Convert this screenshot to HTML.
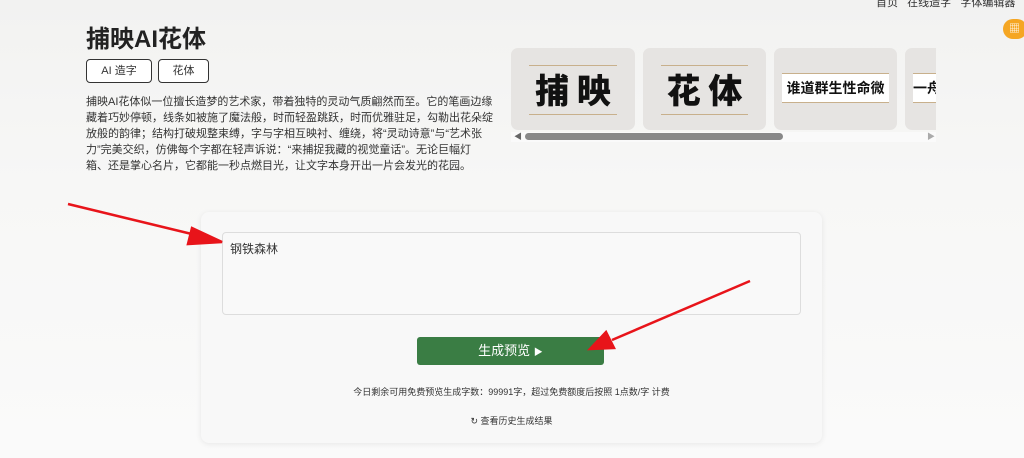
<!DOCTYPE html>
<html><head><meta charset="utf-8"><style>
body{margin:0;width:1024px;height:458px;overflow:hidden;background:linear-gradient(#f2f2f1,#f7f7f6 40%,#fafafa);font-family:"Liberation Sans","Noto Sans CJK SC",sans-serif;color:#333;position:relative}
.a{position:absolute}
h1{position:absolute;left:86px;top:19px;margin:0;font-size:24px;font-weight:bold;color:#222}
.tag{position:absolute;top:59px;height:22px;border:1px solid #333;border-radius:4px;font-size:11px;line-height:22px;text-align:center;background:#fff}
.p{left:86px;top:94px;width:420px;font-size:11px;line-height:16px;color:#333;white-space:nowrap}
.c{position:absolute;top:48px;height:82px;background:#e6e4e2;border-radius:7px;overflow:hidden}
.c .t{position:absolute;left:0;right:0;top:17px;text-align:center;font-family:"Noto Sans CJK SC",sans-serif;font-weight:900;font-size:34px;color:#111;line-height:46px;border-top:1px solid #c8b08c;border-bottom:1px solid #c8b08c;margin:0 18px;height:48px}
.card{left:201px;top:212px;width:621px;height:231px;background:#f8f8f8;border-radius:8px;box-shadow:0 1px 6px rgba(0,0,0,.08)}
</style></head><body>
<div class="a" style="left:876px;top:-6px;font-size:11px;color:#333">首页 &nbsp; 在线造字 &nbsp; 字体编辑器</div>
<div class="a" style="left:1003px;top:19px;width:24px;height:20px;border-radius:10px;background:#f5a623;color:#fff;font-size:11px;line-height:20px;padding-left:6px;box-sizing:border-box">▦</div>
<h1>捕映AI花体</h1>
<div class="tag" style="left:86px;width:64px">AI 造字</div>
<div class="tag" style="left:158px;width:49px">花体</div>
<div class="a p">捕映AI花体似一位擅长造梦的艺术家，带着独特的灵动气质翩然而至。它的笔画边缘<br>藏着巧妙停顿，线条如被施了魔法般，时而轻盈跳跃，时而优雅驻足，勾勒出花朵绽<br>放般的韵律；结构打破规整束缚，字与字相互映衬、缠绕，将“灵动诗意”与“艺术张<br>力”完美交织，仿佛每个字都在轻声诉说：“来捕捉我藏的视觉童话”。无论巨幅灯<br>箱、还是掌心名片，它都能一秒点燃目光，让文字本身开出一片会发光的花园。</div>
<div class="a" style="left:511px;top:48px;width:425px;height:94px;overflow:hidden">
<div class="c" style="left:0;width:124px;top:0"><div class="t">捕 映</div></div>
<div class="c" style="left:132px;width:123px;top:0"><div class="t">花 体</div></div>
<div class="c" style="left:263px;width:123px;top:0"><div class="t" style="font-size:14px;font-weight:bold;background:#fff;margin:0 8px;top:25px;height:28px;line-height:28px">谁道群生性命微</div></div>
<div class="c" style="left:394px;width:60px;top:0"><div class="t" style="font-size:14px;font-weight:bold;background:#fff;margin:0 8px;top:25px;height:28px;line-height:28px;text-align:left">一舟</div></div>
<div class="a" style="left:0;top:84px;width:425px;height:10px;background:#fafafa"></div>
<div class="a" style="left:14px;top:85px;width:258px;height:7px;border-radius:4px;background:#888"></div>
<div class="a" style="left:3px;top:83px;font-size:8px;color:#666">◀</div>
<div class="a" style="left:416px;top:83px;font-size:8px;color:#aaa">▶</div>
</div>
<div class="a card"></div>
<div class="a" style="left:222px;top:232px;width:577px;height:81px;border:1px solid #ddd;border-radius:4px;background:#f9f9f9"></div>
<div class="a" style="left:230px;top:240px;font-size:12px;color:#333">钢铁森林</div>
<div class="a" style="left:417px;top:337px;width:187px;height:28px;background:#3a7d44;border-radius:3px;color:#fff;font-size:13px;line-height:28px;text-align:center">生成预览 <span style="font-size:9px">▶</span></div>
<div class="a" style="left:201px;width:621px;top:385px;text-align:center;font-size:9px;color:#333">今日剩余可用免费预览生成字数：99991字，超过免费额度后按照 1点数/字 计费</div>
<div class="a" style="left:201px;width:621px;top:414px;text-align:center;font-size:9px;color:#333">↻ 查看历史生成结果</div>
<svg class="a" style="left:0;top:0" width="1024" height="458">
<g stroke="#e8141a" stroke-width="2.5" fill="#e8141a">
<line x1="68" y1="204" x2="200" y2="236"/><polygon points="222,242 192,228 188,244"/>
<line x1="750" y1="281" x2="612" y2="340"/><polygon points="590,349 606,332 614,348"/>
</g></svg>
</body></html>
